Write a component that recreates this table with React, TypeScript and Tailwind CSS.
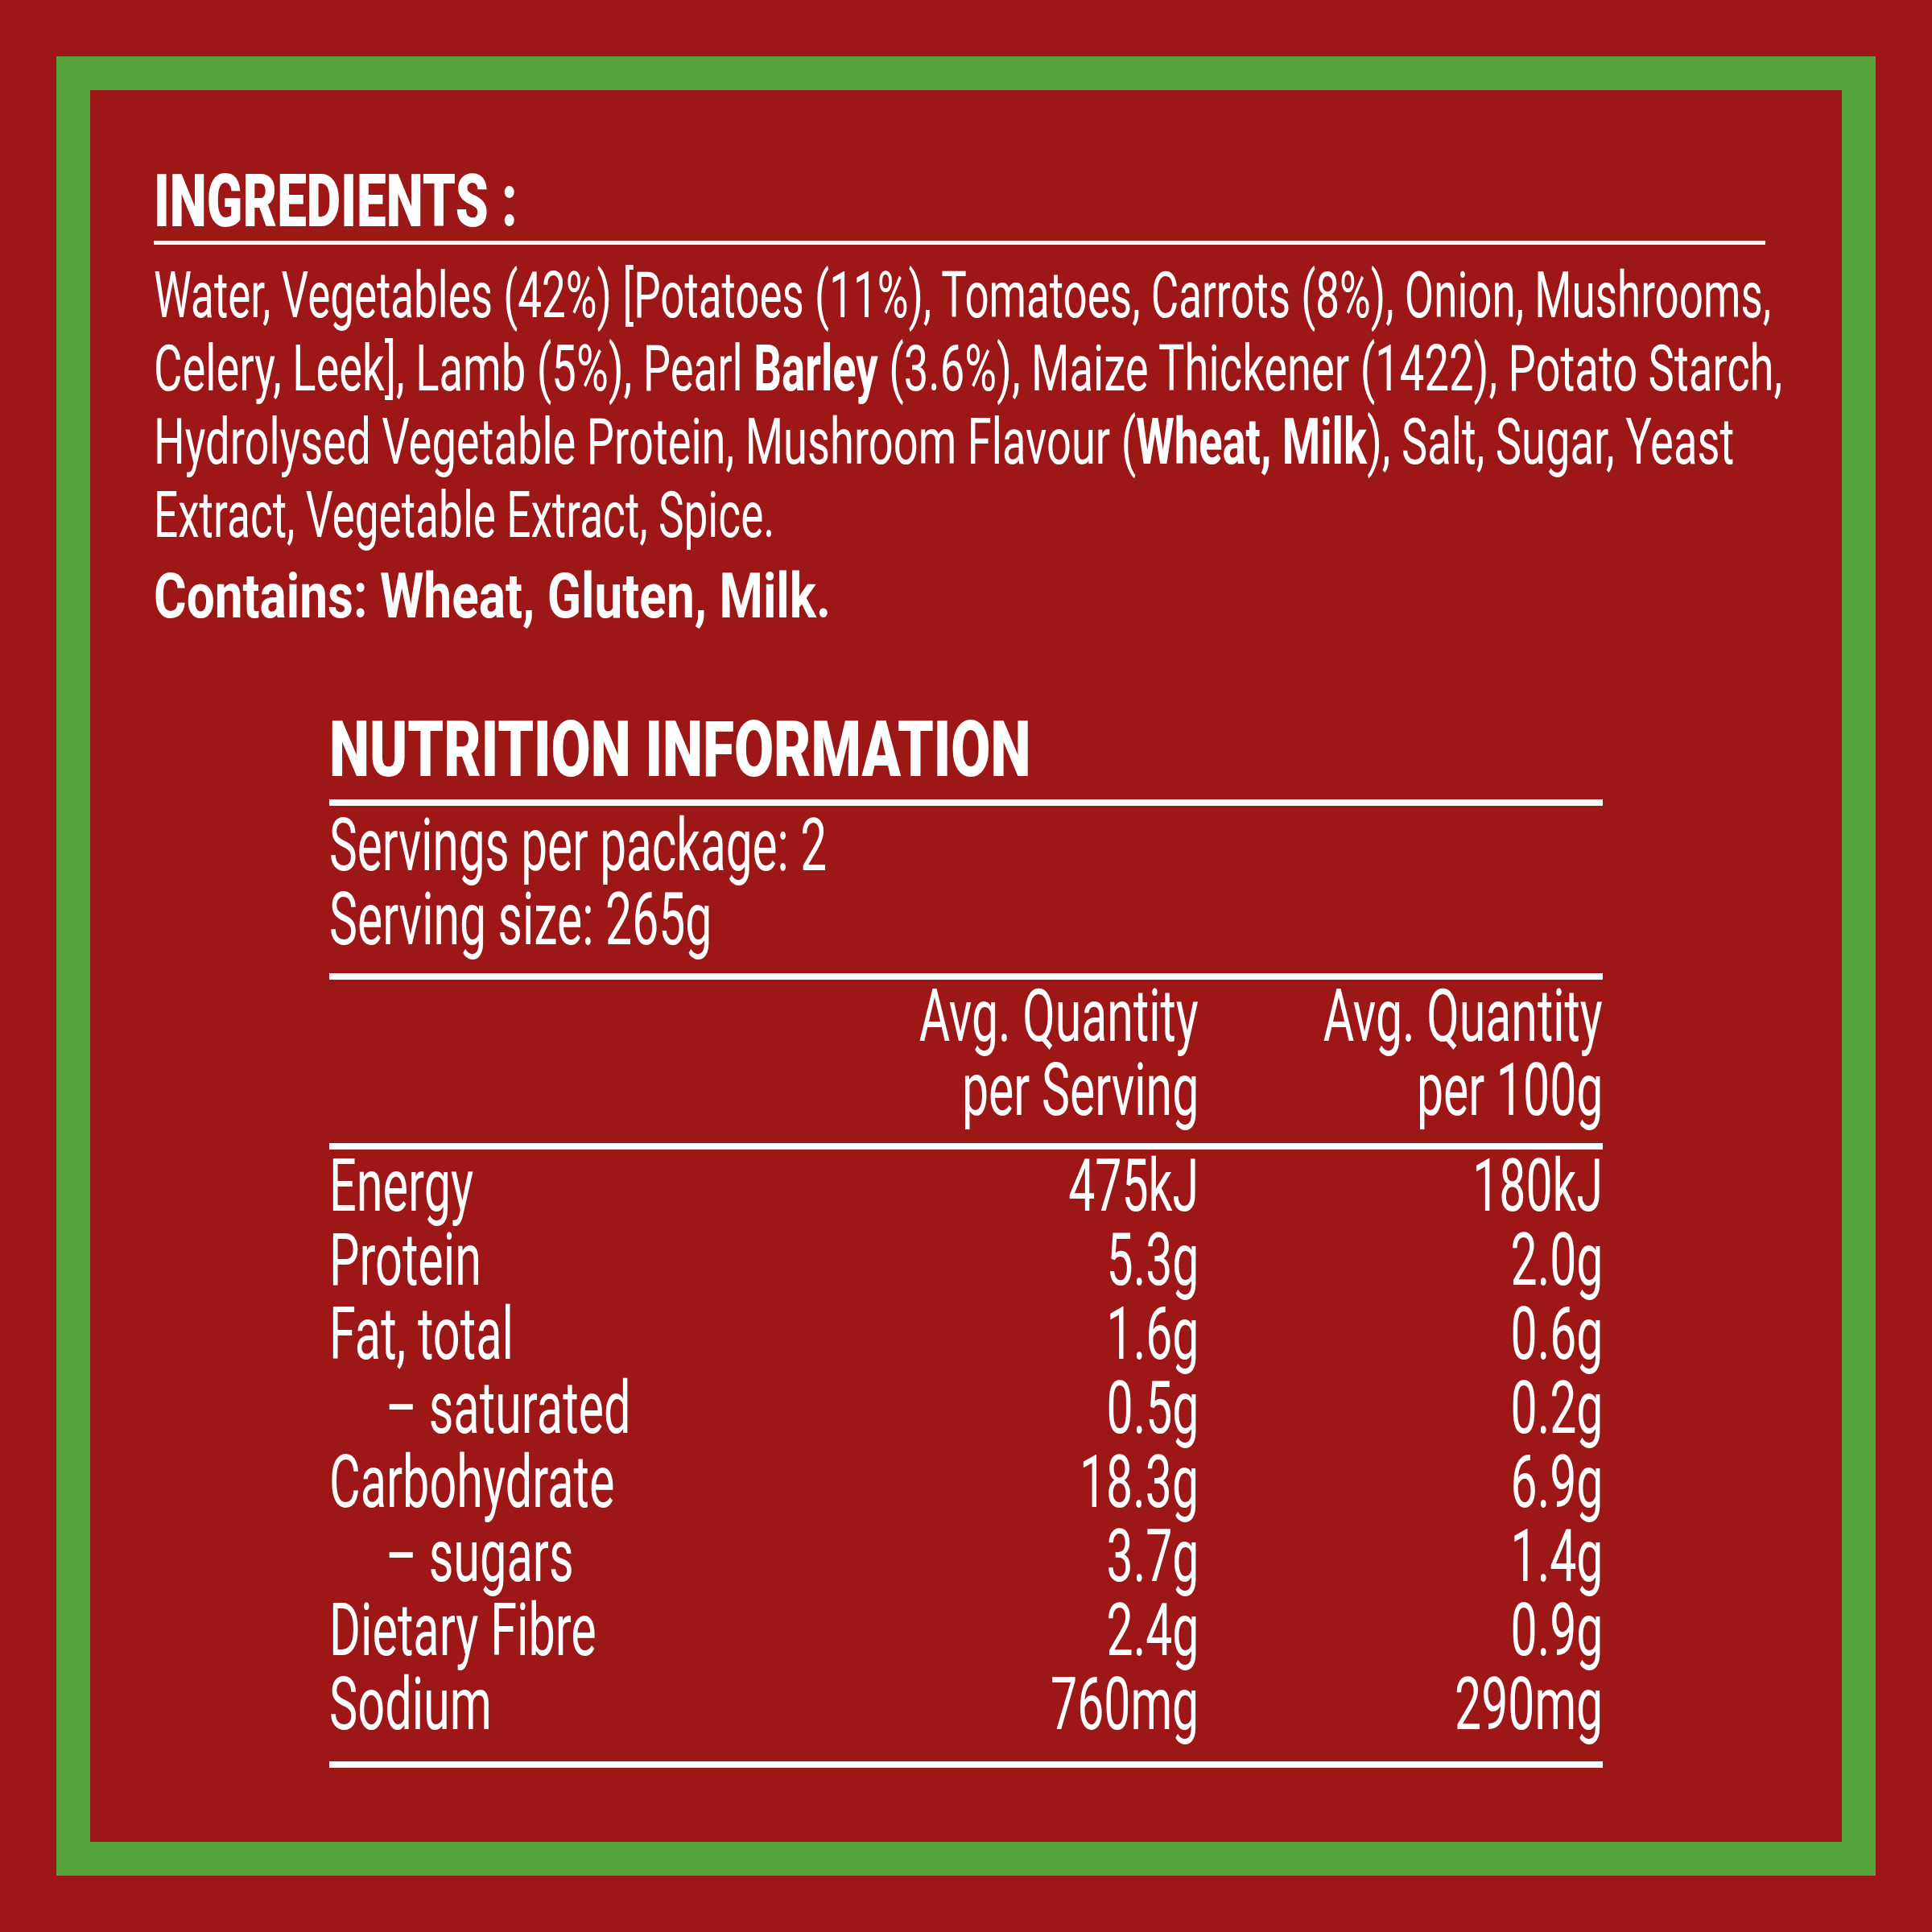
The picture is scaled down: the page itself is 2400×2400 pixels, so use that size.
import React from "react";

const rows: { label: string; a: string; b: string; indent?: boolean }[] = [
  { label: "Energy", a: "475kJ", b: "180kJ" },
  { label: "Protein", a: "5.3g", b: "2.0g" },
  { label: "Fat, total", a: "1.6g", b: "0.6g" },
  { label: "– saturated", a: "0.5g", b: "0.2g", indent: true },
  { label: "Carbohydrate", a: "18.3g", b: "6.9g" },
  { label: "– sugars", a: "3.7g", b: "1.4g", indent: true },
  { label: "Dietary Fibre", a: "2.4g", b: "0.9g" },
  { label: "Sodium", a: "760mg", b: "290mg" },
];

const NL = "inline-block whitespace-nowrap origin-left scale-x-[0.66]";
const NR = "inline-block whitespace-nowrap origin-right scale-x-[0.655]";

function RightCell({ lines }: { lines: string[] }) {
  return (
    <div className="flex min-w-0 flex-col items-end">
      {lines.map((l) => (
        <span key={l} className={NR}>
          {l}
        </span>
      ))}
    </div>
  );
}

export default function App() {
  return (
    <div className="w-[2400px] h-[2400px] overflow-hidden bg-[#9c1715] p-[70px] text-white font-[family-name:Roboto,sans-serif]">
      <div className="h-full w-full border-[42px] border-[#55a43e] pt-[93px] pl-[79px]">
        <section className="w-[2002px]">
          <h1 className="text-[91px] leading-[91px] font-black">
            <span className="block whitespace-nowrap origin-left scale-x-[0.72]">INGREDIENTS :</span>
          </h1>
          <div className="mt-[3px] h-[5px] bg-white" />
          <div className="mt-[18px] text-[79px] leading-[91px] font-normal">
            <span className="block whitespace-nowrap origin-left scale-x-[0.670]">
              Water, Vegetables (42%) [Potatoes (11%), Tomatoes, Carrots (8%), Onion, Mushrooms,
            </span>
            <span className="block whitespace-nowrap origin-left scale-x-[0.688]">
              Celery, Leek], Lamb (5%), Pearl <b className="font-bold">Barley</b> (3.6%), Maize Thickener (1422), Potato Starch,
            </span>
            <span className="block whitespace-nowrap origin-left scale-x-[0.687]">
              Hydrolysed Vegetable Protein, Mushroom Flavour (<b className="font-bold">Wheat, Milk</b>), Salt, Sugar, Yeast
            </span>
            <span className="block whitespace-nowrap origin-left scale-x-[0.673]">Extract, Vegetable Extract, Spice.</span>
          </div>
          <p className="mt-[10px] text-[77px] leading-[91px] font-bold">
            <span className="block whitespace-nowrap origin-left scale-x-[0.807]">Contains: Wheat, Gluten, Milk.</span>
          </p>
        </section>

        <section className="ml-[218px] mt-[96px] w-[1582px]">
          <h2 className="text-[97px] leading-[97px] font-black">
            <span className="block whitespace-nowrap origin-left scale-x-[0.734]">NUTRITION INFORMATION</span>
          </h2>
          <div className="mt-[13px] h-[8px] bg-white" />
          <div className="mt-[4px] text-[90px] leading-[92px]">
            <span className="block whitespace-nowrap origin-left scale-x-[0.649]">Servings per package: 2</span>
            <span className="block whitespace-nowrap origin-left scale-x-[0.654]">Serving size: 265g</span>
          </div>
          <div className="mt-[20px] h-[8px] bg-white" />
          <div className="grid grid-cols-[minmax(0,1fr)_580px_502px] text-[90px] leading-[92px]">
            <div />
            <RightCell lines={["Avg. Quantity", "per Serving"]} />
            <RightCell lines={["Avg. Quantity", "per 100g"]} />
          </div>
          <div className="mt-[19px] h-[8px] bg-white" />
          <div className="grid grid-cols-[minmax(0,1fr)_580px_502px] text-[90px] leading-[92px]">
            {rows.map((r) => (
              <React.Fragment key={r.label}>
                <div className={r.indent ? "min-w-0 pl-[70px]" : "min-w-0"}>
                  <span className={NL}>{r.label}</span>
                </div>
                <div className="flex min-w-0 justify-end">
                  <span className={NR}>{r.a}</span>
                </div>
                <div className="flex min-w-0 justify-end">
                  <span className={NR}>{r.b}</span>
                </div>
              </React.Fragment>
            ))}
          </div>
          <div className="mt-[24px] h-[8px] bg-white" />
        </section>
      </div>
    </div>
  );
}
